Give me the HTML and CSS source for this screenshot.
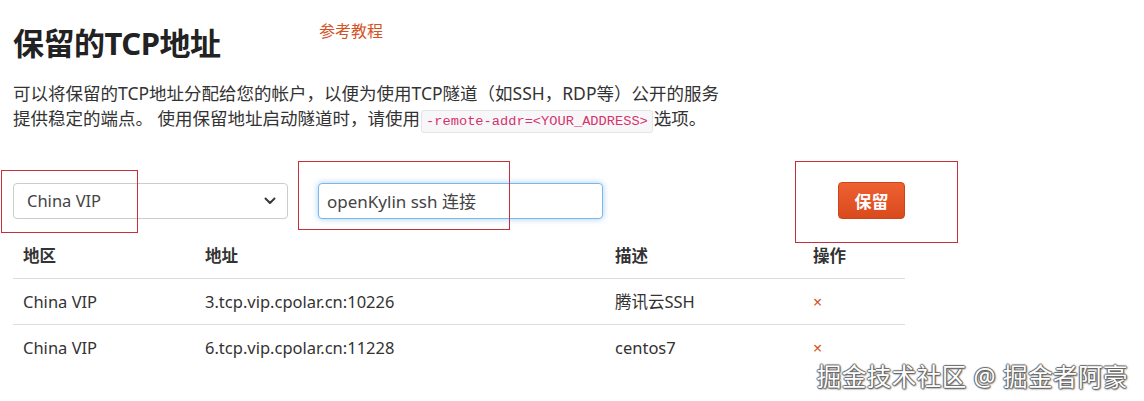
FILE: index.html
```html
<!DOCTYPE html>
<html lang="zh-CN">
<head>
  <meta charset="UTF-8" />
  <meta name="viewport" content="width=device-width, initial-scale=1.0" />
  <title>保留的TCP地址</title>
  <link rel="stylesheet" href="styles.css">
</head>
<body>
  <div class="page">
    <div class="header">
      <h1>保留的TCP地址</h1>
      <a class="guide" href="#">参考教程</a>
    </div>
    <p class="intro">可以将保留的TCP地址分配给您的帐户，以便为使用TCP隧道（如SSH，RDP等）公开的服务提供稳定的端点。 使用保留地址启动隧道时，请使用<code>-remote-addr=&lt;YOUR_ADDRESS&gt;</code>选项。</p>

    <form class="reserve-form">
      <div class="select-wrap">
        <select class="region">
          <option>China VIP</option>
          <option>China Top</option>
          <option>United States</option>
        </select>
        <svg class="chevron" width="12" height="8" viewBox="0 0 12 8"><path d="M1.5 1.5 L6 6 L10.5 1.5" fill="none" stroke="#343a40" stroke-width="2" stroke-linecap="round" stroke-linejoin="round"/></svg>
      </div>
      <input class="desc focused" type="text" value="openKylin ssh 连接" />
      <button type="button" class="btn-reserve">保留</button>
    </form>

    <table class="addr-table">
      <thead>
        <tr>
          <th class="c-region">地区</th>
          <th class="c-addr">地址</th>
          <th class="c-desc">描述</th>
          <th class="c-op">操作</th>
        </tr>
      </thead>
      <tbody>
        <tr>
          <td>China VIP</td>
          <td>3.tcp.vip.cpolar.cn:10226</td>
          <td>腾讯云SSH</td>
          <td><a class="del" href="#">×</a></td>
        </tr>
        <tr>
          <td>China VIP</td>
          <td>6.tcp.vip.cpolar.cn:11228</td>
          <td>centos7</td>
          <td><a class="del" href="#">×</a></td>
        </tr>
      </tbody>
    </table>

    <div class="mark mark-1"></div>
    <div class="mark mark-2"></div>
    <div class="mark mark-3"></div>
  </div>
  <div class="watermark">掘金技术社区 @ 掘金者阿豪</div>
</body>
</html>
```

FILE: styles.css
```css
body {
  margin: 0;
  font-family: "Noto Sans", "Noto Sans CJK SC", sans-serif;
  color: #333;
  background-color: #fff;
}
.page {
  position: relative;
  padding: 19px 13px 0;
}
.header {
  display: grid;
  grid-template-columns: 306px auto;
  align-items: start;
}
h1 {
  margin: 4px 0 0;
  font-size: 31px;
  line-height: 40px;
  font-weight: bold;
  color: #222;
  letter-spacing: -0.5px;
}
.guide {
  font-size: 16px;
  line-height: 24px;
  color: #d4521f;
  text-decoration: none;
}
.intro {
  max-width: 722px;
  margin: 18px 0 0;
  font-size: 17.5px;
  line-height: 25px;
}
code {
  font-family: "Liberation Mono", monospace;
  font-size: 13.7px;
  color: #d6336c;
  background-color: #f7f7f9;
  border: 1px solid #e5e5e5;
  border-radius: 3px;
  padding: 3px 4px;
  margin: 0 1px;
}
.reserve-form {
  display: flex;
  align-items: center;
  gap: 30px;
  width: 892px;
  margin-top: 48px;
}
.select-wrap {
  position: relative;
}
.region {
  appearance: none;
  width: 275px;
  height: 36px;
  padding: 0 13px;
  font-family: inherit;
  font-size: 16.5px;
  color: #444;
  background-color: #fff;
  border: 1px solid #ccc;
  border-radius: 4px;
}
.chevron {
  position: absolute;
  right: 12px;
  top: 14px;
  pointer-events: none;
}
.desc {
  width: 285px;
  height: 36px;
  box-sizing: border-box;
  padding: 0 8px;
  font-family: inherit;
  font-size: 17px;
  color: #444;
  border: 1px solid #ccc;
  border-radius: 4px;
  outline: none;
}
.desc.focused {
  border-color: #7fb6e6;
  box-shadow: 0 0 6px rgba(102, 175, 233, 0.6);
}
.btn-reserve {
  margin-left: auto;
  width: 67px;
  height: 37px;
  font-family: inherit;
  font-size: 17px;
  font-weight: bold;
  color: #fff;
  border: 1px solid #c9461b;
  border-radius: 4px;
  background: linear-gradient(#ee6133, #d94a1c);
  cursor: pointer;
}
.addr-table {
  width: 892px;
  margin-top: 15px;
  border-collapse: collapse;
  font-size: 16.5px;
}
.addr-table th,
.addr-table td {
  text-align: left;
  padding: 10px 10px;
  line-height: 24px;
}
.addr-table th {
  font-weight: bold;
  border-bottom: 1px solid #ddd;
}
.addr-table td {
  padding-top: 11px;
  padding-bottom: 10px;
  border-bottom: 1px solid #ddd;
}
.addr-table tbody tr:last-child td {
  border-bottom: none;
}
.c-region { width: 162px; }
.c-addr { width: 390px; }
.c-desc { width: 178px; }
.del {
  color: #d4521f;
  text-decoration: none;
  font-size: 16px;
}
.mark {
  position: absolute;
  border: 1px solid #c52f3c;
}
.mark-1 { left: 1px; top: 170px; width: 135px; height: 61px; }
.mark-2 { left: 298px; top: 161px; width: 210px; height: 67px; }
.mark-3 { left: 795px; top: 161px; width: 161px; height: 80px; }
.watermark {
  position: absolute;
  right: 16px;
  top: 358px;
  font-size: 24.5px;
  color: #fff;
  letter-spacing: 0.5px;
  text-shadow: -1px 0 1px #666, 1px 0 1px #666, 0 -1px 1px #666, 0 1px 1px #666, 1px 1px 2px #555;
}
```
